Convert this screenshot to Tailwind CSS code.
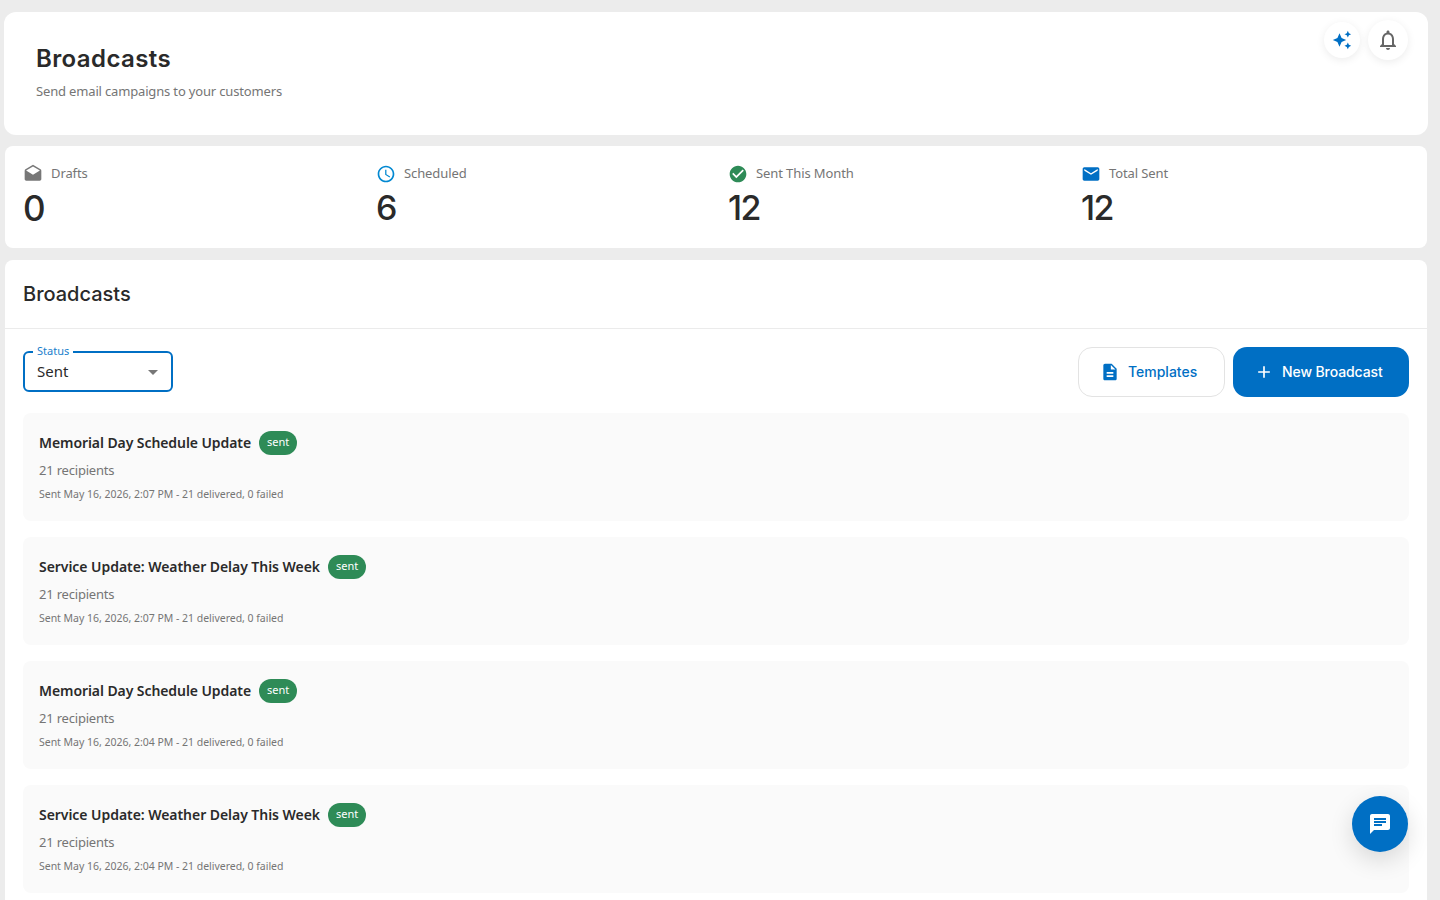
<!DOCTYPE html>
<html lang="en">
<head>
    <meta charset="UTF-8">
    <title>Broadcasts</title>
    <script src="https://cdn.jsdelivr.net/npm/@tailwindcss/browser@4"></script>
</head>
<body class="bg-[#ececec] h-screen overflow-hidden font-['Noto_Sans',sans-serif] text-[#2a2a2a]">
    <div class="relative h-[900px] overflow-hidden pt-3 pr-3 pl-1">
        <!-- Header -->
        <div class="bg-white rounded-xl h-[123px] px-8 pt-[30px]">
            <h1 class="font-['Inter',sans-serif] text-[24px] leading-[34px] font-semibold tracking-[0.4px]">Broadcasts</h1>
            <p class="mt-[5px] text-[13px] leading-5 tracking-[-0.16px] text-[#757575]">Send email campaigns to your customers</p>
        </div>

        <!-- top right buttons -->
        <div class="absolute top-5 right-8 flex items-center gap-2">
            <button class="w-9 h-9 rounded-full bg-white shadow-[0_2px_8px_rgba(0,0,0,0.08)] flex items-center justify-center">
                <svg class="w-5 h-5 fill-[#006fc4]" viewBox="0 0 24 24"><path d="M19 9l1.25-2.75L23 5l-2.75-1.25L19 1l-1.25 2.75L15 5l2.75 1.25L19 9zm-7.5.5L9 4 6.5 9.5 1 12l5.5 2.5L9 20l2.5-5.5L17 12l-5.5-2.5zM19 15l-1.25 2.75L15 19l2.75 1.25L19 23l1.25-2.75L23 19l-2.75-1.25L19 15z"/></svg>
            </button>
            <button class="w-10 h-10 rounded-full bg-white shadow-[0_2px_8px_rgba(0,0,0,0.08)] flex items-center justify-center">
                <svg class="w-6 h-6 fill-[#666]" viewBox="0 0 24 24"><path d="M12 22c1.1 0 2-.9 2-2h-4c0 1.1.9 2 2 2zm6-6v-5c0-3.07-1.63-5.64-4.5-6.32V4c0-.83-.67-1.5-1.5-1.5s-1.5.67-1.5 1.5v.68C7.64 5.36 6 7.92 6 11v5l-2 2v1h16v-1l-2-2zm-2 1H8v-6c0-2.48 1.51-4.5 4-4.5s4 2.02 4 4.5v6z"/></svg>
            </button>
        </div>

        <!-- Stats -->
        <div class="mt-[11px] mx-px bg-white rounded-lg h-[102px] pl-[18px] pt-4 grid grid-cols-[353px_352px_353px_1fr]">
            <div>
                <div class="flex items-center gap-2 h-6 text-[13px] tracking-[-0.1px] text-[#757575]">
                    <svg class="w-5 h-5 fill-[#777]" viewBox="0 0 24 24"><path d="M21.99 8c0-.72-.37-1.35-.94-1.7L12 1 2.95 6.3C2.38 6.65 2 7.28 2 8v10c0 1.1.9 2 2 2h16c1.1 0 2-.9 2-2l-.01-10zM12 13 3.74 7.84 12 3l8.26 4.84L12 13z"/></svg>
                    Drafts
                </div>
                <div class="font-['Inter',sans-serif] text-[35px] leading-[44px] font-medium">0</div>
            </div>
            <div>
                <div class="flex items-center gap-2 h-6 text-[13px] tracking-[-0.1px] text-[#757575]">
                    <svg class="w-5 h-5 fill-[#0288d1]" viewBox="0 0 24 24"><path d="M11.99 2C6.47 2 2 6.48 2 12s4.47 10 9.99 10C17.52 22 22 17.52 22 12S17.52 2 11.99 2zM12 20c-4.42 0-8-3.58-8-8s3.58-8 8-8 8 3.58 8 8-3.58 8-8 8z"/><path d="M12.5 7H11v6l5.25 3.15.75-1.23-4.5-2.67z"/></svg>
                    Scheduled
                </div>
                <div class="font-['Inter',sans-serif] text-[34px] leading-[44px] font-medium">6</div>
            </div>
            <div>
                <div class="flex items-center gap-2 h-6 text-[13px] tracking-[-0.1px] text-[#757575]">
                    <svg class="w-5 h-5 fill-[#2e8b57]" viewBox="0 0 24 24"><path d="M12 2C6.48 2 2 6.48 2 12s4.48 10 10 10 10-4.48 10-10S17.52 2 12 2zm-2 15-5-5 1.41-1.41L10 14.17l7.59-7.59L19 8l-9 9z"/></svg>
                    Sent This Month
                </div>
                <div class="font-['Inter',sans-serif] text-[34px] leading-[44px] font-medium tracking-[-1.5px]">12</div>
            </div>
            <div>
                <div class="flex items-center gap-2 h-6 text-[13px] tracking-[-0.1px] text-[#757575]">
                    <svg class="w-5 h-5 fill-[#006fc4]" viewBox="0 0 24 24"><path d="M20 4H4c-1.1 0-1.99.9-1.99 2L2 18c0 1.1.9 2 2 2h16c1.1 0 2-.9 2-2V6c0-1.1-.9-2-2-2zm0 4-8 5-8-5V6l8 5 8-5v2z"/></svg>
                    Total Sent
                </div>
                <div class="font-['Inter',sans-serif] text-[34px] leading-[44px] font-medium tracking-[-1.5px]">12</div>
            </div>
        </div>

        <!-- Main card -->
        <div class="mt-3 mx-px bg-white rounded-t-lg pb-10">
            <div class="h-[69px] border-b border-[#ebebeb] pl-[18px] flex items-center">
                <h2 class="font-['Inter',sans-serif] text-[20px] font-medium">Broadcasts</h2>
            </div>
            <div class="px-[18px] pt-[18px]">
                <div class="flex items-center justify-between h-[50px]">
                    <div class="relative w-[150px] h-[41px] mb-0.5 border-2 border-[#006fc4] rounded-md flex items-center justify-between pl-[12px] pr-[6px]">
                        <span class="absolute -top-[9px] left-[8px] bg-white px-[4px] text-[11px] leading-[14px] text-[#1a80cc]">Status</span>
                        <span class="text-[15px] text-[#2a2a2a]">Sent</span>
                        <svg class="w-6 h-6 mt-[2px] fill-[#777]" viewBox="0 0 24 24"><path d="M7 10l5 5 5-5z"/></svg>
                    </div>
                    <div class="flex gap-2">
                        <button class="w-[147px] h-[50px] pl-[21px] pb-px rounded-[14px] border border-[#e3e3e3] bg-white flex items-center gap-2 font-['Inter',sans-serif] text-[14px] font-medium text-[#006fc4]">
                            <svg class="w-5 h-5 fill-[#006fc4]" viewBox="0 0 24 24"><path d="M14 2H6c-1.1 0-1.99.9-1.99 2L4 20c0 1.1.89 2 1.99 2H18c1.1 0 2-.9 2-2V8l-6-6zm2 16H8v-2h8v2zm0-4H8v-2h8v2zm-3-5V3.5L18.5 9H13z"/></svg>
                            Templates
                        </button>
                        <button class="w-[176px] h-[50px] pl-[21px] pb-px rounded-[14px] bg-[#006fc4] flex items-center gap-2 font-['Inter',sans-serif] text-[14px] tracking-[-0.1px] font-medium text-white">
                            <svg class="w-5 h-5 fill-white" viewBox="0 0 24 24"><path d="M19 13h-6v6h-2v-6H5v-2h6V5h2v6h6v2z"/></svg>
                            New Broadcast
                        </button>
                    </div>
                </div>

                <div class="mt-4 flex flex-col gap-4">
                    <div class="bg-[#fafafa] rounded-lg h-[108px] px-4 pt-[18px]">
                        <div class="flex items-center gap-2 h-6">
                            <span class="mb-0.5 text-[14px] font-semibold tracking-[-0.08px] text-[#2a2a2a]">Memorial Day Schedule Update</span>
                            <span class="h-6 px-2 rounded-full bg-[#2e8b57] text-white text-[11px] leading-[22px]">sent</span>
                        </div>
                        <p class="mt-[5px] text-[13px] tracking-[-0.2px] leading-5 text-[#757575]">21 recipients</p>
                        <p class="mt-[5px] text-[10.5px] tracking-[-0.02px] leading-[18px] text-[#757575]">Sent May 16, 2026, 2:07 PM - 21 delivered, 0 failed</p>
                    </div>
                    <div class="bg-[#fafafa] rounded-lg h-[108px] px-4 pt-[18px]">
                        <div class="flex items-center gap-2 h-6">
                            <span class="mb-0.5 text-[14px] font-semibold tracking-[-0.05px] text-[#2a2a2a]">Service Update: Weather Delay This Week</span>
                            <span class="h-6 px-2 rounded-full bg-[#2e8b57] text-white text-[11px] leading-[22px]">sent</span>
                        </div>
                        <p class="mt-[5px] text-[13px] tracking-[-0.2px] leading-5 text-[#757575]">21 recipients</p>
                        <p class="mt-[5px] text-[10.5px] tracking-[-0.02px] leading-[18px] text-[#757575]">Sent May 16, 2026, 2:07 PM - 21 delivered, 0 failed</p>
                    </div>
                    <div class="bg-[#fafafa] rounded-lg h-[108px] px-4 pt-[18px]">
                        <div class="flex items-center gap-2 h-6">
                            <span class="mb-0.5 text-[14px] font-semibold tracking-[-0.08px] text-[#2a2a2a]">Memorial Day Schedule Update</span>
                            <span class="h-6 px-2 rounded-full bg-[#2e8b57] text-white text-[11px] leading-[22px]">sent</span>
                        </div>
                        <p class="mt-[5px] text-[13px] tracking-[-0.2px] leading-5 text-[#757575]">21 recipients</p>
                        <p class="mt-[5px] text-[10.5px] tracking-[-0.02px] leading-[18px] text-[#757575]">Sent May 16, 2026, 2:04 PM - 21 delivered, 0 failed</p>
                    </div>
                    <div class="bg-[#fafafa] rounded-lg h-[108px] px-4 pt-[18px]">
                        <div class="flex items-center gap-2 h-6">
                            <span class="mb-0.5 text-[14px] font-semibold tracking-[-0.05px] text-[#2a2a2a]">Service Update: Weather Delay This Week</span>
                            <span class="h-6 px-2 rounded-full bg-[#2e8b57] text-white text-[11px] leading-[22px]">sent</span>
                        </div>
                        <p class="mt-[5px] text-[13px] tracking-[-0.2px] leading-5 text-[#757575]">21 recipients</p>
                        <p class="mt-[5px] text-[10.5px] tracking-[-0.02px] leading-[18px] text-[#757575]">Sent May 16, 2026, 2:04 PM - 21 delivered, 0 failed</p>
                    </div>
                </div>
            </div>
        </div>

        <!-- chat button -->
        <button class="absolute left-[1352px] top-[796px] w-14 h-14 rounded-full bg-[#006fc4] shadow-[0_8px_24px_rgba(0,0,0,0.14)] flex items-center justify-center">
            <svg class="w-6 h-6 fill-white" viewBox="0 0 24 24"><path d="M20 2H4c-1.1 0-1.99.9-1.99 2L2 22l4-4h14c1.1 0 2-.9 2-2V4c0-1.1-.9-2-2-2zM6 9h12v2H6V9zm8 5H6v-2h8v2zm4-6H6V6h12v2z"/></svg>
        </button>
    </div>
</body>
</html>
